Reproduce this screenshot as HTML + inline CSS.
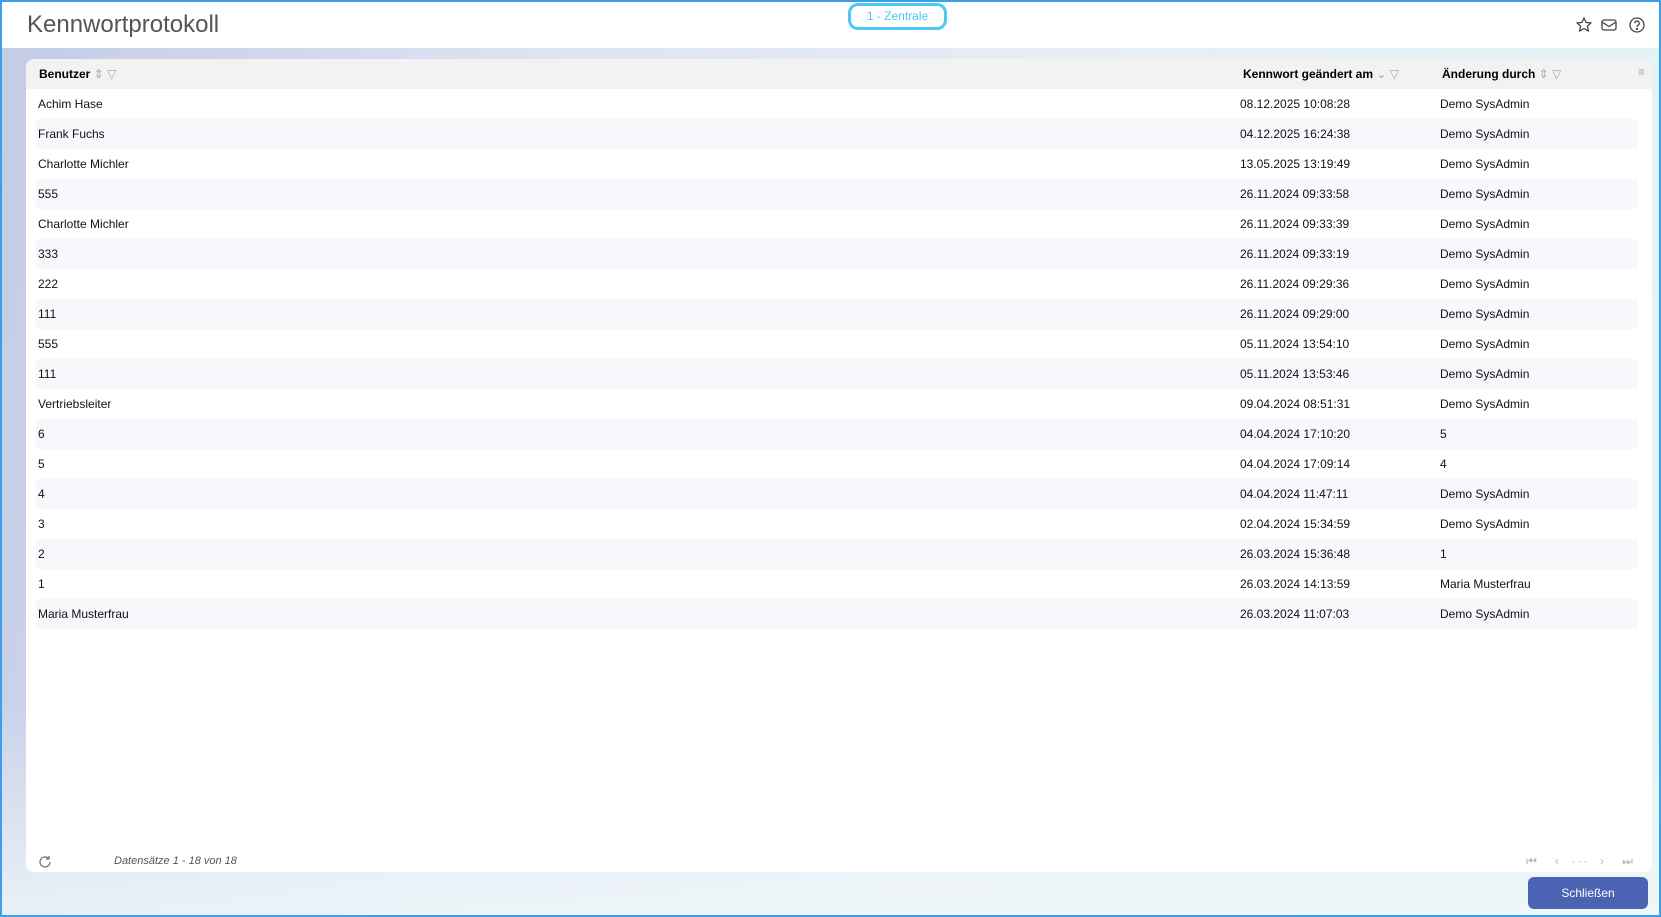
<!DOCTYPE html>
<html><head><meta charset="utf-8"><style>
*{margin:0;padding:0;box-sizing:border-box}
html,body{width:1661px;height:917px;overflow:hidden;font-family:"Liberation Sans",Arial,sans-serif}
body{position:relative;background:linear-gradient(100deg,#c3cbe6 0%,#dde3f1 30%,#e8edf5 60%,#e0f6f4 100%)}
.bd{position:absolute;left:0;top:0;width:1661px;height:917px;border:2px solid #3aa0e8;pointer-events:none;z-index:9}
.hdr{position:absolute;left:0;top:0;width:100%;height:48px;background:#fff}
.fade{position:absolute;left:0;top:700px;width:100%;height:217px;background:linear-gradient(180deg,rgba(255,255,255,0),rgba(240,248,250,.8))}
.title{position:absolute;left:27px;top:11px;font-size:24px;color:#555}
.badge{position:absolute;left:848px;top:3px;width:99px;height:27px;border:3px solid #4cc8f6;border-radius:10px;text-align:center;line-height:21px;font-size:12px;color:#4cc8f6}
.icons{position:absolute;right:6px;top:16px}
.card{position:absolute;left:26px;top:59px;width:1626px;height:813px;background:#fff;border-radius:8px;overflow:hidden}
.th{position:absolute;left:0;top:0;width:100%;height:30px;background:#f2f2f2;font-weight:bold;font-size:12px}
.th span{position:absolute;top:8px}
.row{position:absolute;left:10px;width:1602px;height:30px;font-size:12px;color:#111}
.row.s{background:#f7f8fc}
.row span{position:absolute;top:8px}
.c1{left:2px}.c2{left:1204px}.c3{left:1404px}
.th .c1{left:13px}.th .c2{left:1217px}.th .c3{left:1416px}
.foot{position:absolute;left:88px;top:796px;font-size:11px;font-style:italic;color:#555}
.btn{position:absolute;left:1528px;top:877px;width:120px;height:32px;background:#4a63b3;border-radius:6px;color:#fff;font-size:12px;text-align:center;line-height:32px}
.g{color:#aaa;font-weight:normal}
</style></head><body>
<div class="fade"></div>
<div class="hdr"></div>
<div class="title">Kennwortprotokoll</div>
<div class="badge">1 - Zentrale</div>
<svg class="icons" width="80" height="18" viewBox="0 0 80 18" fill="none" stroke="#444" stroke-width="1.3">
<path d="M9 2l2.1 4.4 4.7.6-3.4 3.2.9 4.7L9 12.6 4.7 14.9l.9-4.7L2.2 7l4.7-.6z"/>
<rect x="27" y="4" width="14" height="10" rx="2"/><path d="M27 6l7 4.5L41 6"/>
<circle cx="62" cy="9" r="7"/><path d="M59.8 7.2a2.2 2.2 0 1 1 3 2.1c-.7.3-.8.8-.8 1.6"/><circle cx="62" cy="13" r=".5" fill="#444"/>
</svg>
<div class="card">
<div class="th"><span class="c1">Benutzer <span class="g" style="position:static">⇕ ▽</span></span><span class="c2">Kennwort geändert am <span class="g" style="position:static">⌄ ▽</span></span><span class="c3">Änderung durch <span class="g" style="position:static">⇕ ▽</span></span><span class="g" style="left:1612px;top:6px">≡</span></div>
<div class="row" style="top:30px"><span class="c1">Achim Hase</span><span class="c2">08.12.2025 10:08:28</span><span class="c3">Demo SysAdmin</span></div>
<div class="row s" style="top:60px"><span class="c1">Frank Fuchs</span><span class="c2">04.12.2025 16:24:38</span><span class="c3">Demo SysAdmin</span></div>
<div class="row" style="top:90px"><span class="c1">Charlotte Michler</span><span class="c2">13.05.2025 13:19:49</span><span class="c3">Demo SysAdmin</span></div>
<div class="row s" style="top:120px"><span class="c1">555</span><span class="c2">26.11.2024 09:33:58</span><span class="c3">Demo SysAdmin</span></div>
<div class="row" style="top:150px"><span class="c1">Charlotte Michler</span><span class="c2">26.11.2024 09:33:39</span><span class="c3">Demo SysAdmin</span></div>
<div class="row s" style="top:180px"><span class="c1">333</span><span class="c2">26.11.2024 09:33:19</span><span class="c3">Demo SysAdmin</span></div>
<div class="row" style="top:210px"><span class="c1">222</span><span class="c2">26.11.2024 09:29:36</span><span class="c3">Demo SysAdmin</span></div>
<div class="row s" style="top:240px"><span class="c1">111</span><span class="c2">26.11.2024 09:29:00</span><span class="c3">Demo SysAdmin</span></div>
<div class="row" style="top:270px"><span class="c1">555</span><span class="c2">05.11.2024 13:54:10</span><span class="c3">Demo SysAdmin</span></div>
<div class="row s" style="top:300px"><span class="c1">111</span><span class="c2">05.11.2024 13:53:46</span><span class="c3">Demo SysAdmin</span></div>
<div class="row" style="top:330px"><span class="c1">Vertriebsleiter</span><span class="c2">09.04.2024 08:51:31</span><span class="c3">Demo SysAdmin</span></div>
<div class="row s" style="top:360px"><span class="c1">6</span><span class="c2">04.04.2024 17:10:20</span><span class="c3">5</span></div>
<div class="row" style="top:390px"><span class="c1">5</span><span class="c2">04.04.2024 17:09:14</span><span class="c3">4</span></div>
<div class="row s" style="top:420px"><span class="c1">4</span><span class="c2">04.04.2024 11:47:11</span><span class="c3">Demo SysAdmin</span></div>
<div class="row" style="top:450px"><span class="c1">3</span><span class="c2">02.04.2024 15:34:59</span><span class="c3">Demo SysAdmin</span></div>
<div class="row s" style="top:480px"><span class="c1">2</span><span class="c2">26.03.2024 15:36:48</span><span class="c3">1</span></div>
<div class="row" style="top:510px"><span class="c1">1</span><span class="c2">26.03.2024 14:13:59</span><span class="c3">Maria Musterfrau</span></div>
<div class="row s" style="top:540px"><span class="c1">Maria Musterfrau</span><span class="c2">26.03.2024 11:07:03</span><span class="c3">Demo SysAdmin</span></div>
<svg style="position:absolute;left:12px;top:796px" width="14" height="14" viewBox="0 0 14 14" fill="none" stroke="#777" stroke-width="1.3"><path d="M12 7a5 5 0 1 1-1.5-3.6M11 1v3h-3"/></svg>
<div class="foot">Datensätze 1 - 18 von 18</div>
<div style="position:absolute;left:1500px;top:795px;font-size:12px;color:#bbb;letter-spacing:2px">⏮&nbsp;&nbsp; ‹ &nbsp;··· &nbsp;›&nbsp;&nbsp; ⏭</div>
</div>
<div class="btn">Schließen</div>
<div class="bd"></div>
</body></html>
